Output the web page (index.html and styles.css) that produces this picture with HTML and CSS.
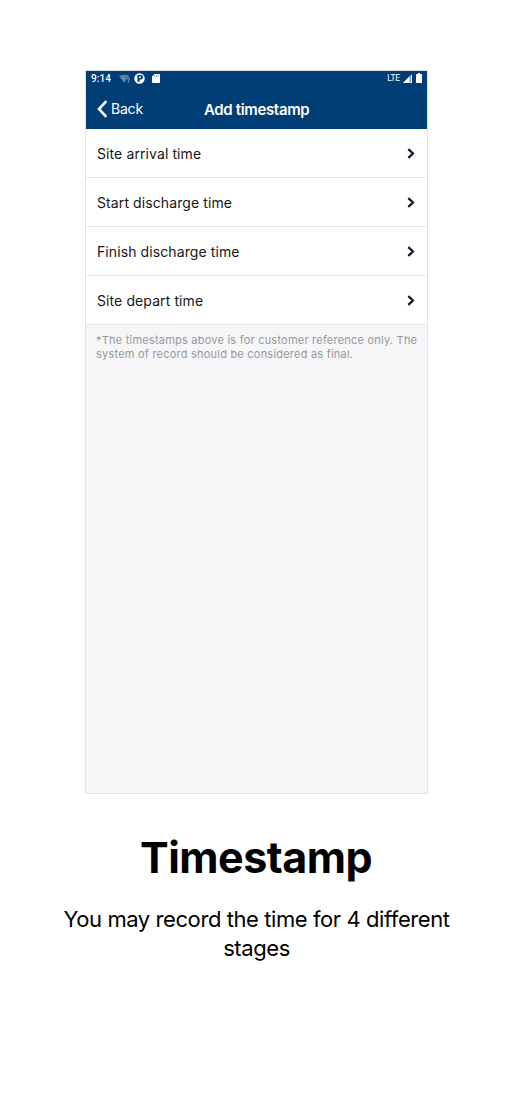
FILE: index.html
```html
<!DOCTYPE html>
<html lang="en">
<head>
<meta charset="utf-8">
<title>Timestamp</title>
<link rel="stylesheet" href="styles.css">
</head>
<body>
<main class="page">
  <section class="phone">
    <header class="top">
      <div class="status">
        <span class="clock">9:14</span>
        <svg class="wifi" width="12" height="10" viewBox="0 0 12 10"><path d="M0 2.3Q5 -.8 10.4 2.2L9.2 3.5H7.3V6L5.3 8.7Z" fill="#5e84a6"/><path d="M8 5.3c0-1.4 2.5-1.4 2.5 0 0 1-1.2 1-1.2 2M9.3 8v1" fill="none" stroke="#a8bdcf" stroke-width="1"/></svg>
        <svg class="app" width="11" height="11" viewBox="0 0 11 11"><circle cx="5.500" cy="5.500" r="5.200" fill="#fff"/><path d="M3.500 2h3.300a2.200 2.200 0 0 1 0 4.500H5.700v2.200H3.500Z" fill="#003e75"/><path d="M5 3.400h1.900v1.700H5z" fill="#fff"/></svg>
        <svg class="card" width="8" height="9" viewBox="0 0 8 9"><path d="M2.500 0H7a1 1 0 0 1 1 1v7a1 1 0 0 1-1 1H1a1 1 0 0 1-1-1V2.500Z" fill="#fff"/><path d="M2.600 1.300v1.500M4.300 1.300v1.500M6 1.300v1.500" stroke="#003e75" stroke-width=".6"/></svg>
        <span class="lte">LTE</span>
        <svg class="signal" width="9" height="9" viewBox="0 0 9 9"><path d="M9 0v9H0Z" fill="#8ba7bf"/><path d="M6.400 2.600V9H0ZM8.200 .8H9V9H7.200V8.200h1Z" fill="#fff"/></svg>
        <svg class="battery" width="6" height="10" viewBox="0 0 6 10"><path d="M2 0h2v1h1.400q.6 0 .6.600v7.800q0 .6-.6.600H.6Q0 10 0 9.400V1.600Q0 1 .6 1H2Z" fill="#fff"/></svg>
      </div>
      <nav class="nav">
        <div class="back"><svg width="11" height="18" viewBox="0 0 11 18"><path d="M9.300 1.200 2 9l7.300 7.800" fill="none" stroke="#fff" stroke-width="2.600"/></svg><span>Back</span></div>
        <h2 class="nav-title">Add timestamp</h2>
      </nav>
    </header>
    <ul class="list">
      <li class="row"><span>Site arrival time</span><svg class="chev" width="8" height="11" viewBox="0 0 8 11"><path d="M1.300 1.100 6 5.500 1.300 9.900"/></svg></li>
      <li class="row"><span>Start discharge time</span><svg class="chev" width="8" height="11" viewBox="0 0 8 11"><path d="M1.300 1.100 6 5.500 1.300 9.900"/></svg></li>
      <li class="row"><span>Finish discharge time</span><svg class="chev" width="8" height="11" viewBox="0 0 8 11"><path d="M1.300 1.100 6 5.500 1.300 9.900"/></svg></li>
      <li class="row"><span>Site depart time</span><svg class="chev" width="8" height="11" viewBox="0 0 8 11"><path d="M1.300 1.100 6 5.500 1.300 9.900"/></svg></li>
    </ul>
    <p class="note">*The timestamps above is for customer reference only. The<br>system of record should be considered as final.</p>
  </section>
  <h1 class="title">Timestamp</h1>
  <p class="desc">You may record the time for 4 different<br>stages</p>
</main>
</body>
</html>
```
FILE: styles.css
```css
* { box-sizing: border-box; }
body { margin: 0; background: #fff; color: #000; font-family: Inter, "Liberation Sans", sans-serif; }
svg { display: block; flex: none; }
.page { height: 1108px; padding-top: 70px; display: flex; flex-direction: column; align-items: center; }
.phone { width: 343px; height: 724px; margin-left: 1px; border: 1px solid #e2e2e9; background: #f6f6f9; flex: none; }
.top { height: 58px; background: #003e75; color: #fff; }
.status { height: 15px; padding: 0 5px 0 5px; display: flex; align-items: center; }
.clock { width: 28px; font: 500 10px/15px Roboto, sans-serif; letter-spacing: .1px; }
.app { margin-left: 3px; }
.card { margin-left: 7px; }
.lte { margin-left: auto; font: 400 8.500px/15px Roboto, sans-serif; letter-spacing: -.2px; }
.signal { margin-left: 3px; }
.battery { margin-left: 4px; margin-top: -1px; }
.nav { height: 43px; padding-left: 11px; display: grid; grid-template-columns: 107px 1fr; align-items: center; }
.back { display: flex; align-items: center; gap: 3px; margin-top: 2px; font-size: 14px; line-height: 18px; letter-spacing: -.2px; }
.nav-title { margin: 4px 0 0; font-size: 15px; line-height: 20px; font-weight: 600; letter-spacing: -.35px; }
.list { margin: 0; padding: 0; list-style: none; background: #fff; }
.row { height: 49px; padding: 0 12px 0 11px; display: flex; align-items: center; justify-content: space-between; border-bottom: 1px solid #e8e8ea; font-size: 14px; color: #161616; letter-spacing: .1px; }
.chev path { fill: none; stroke: #10162a; stroke-width: 2.2; }
.note { margin: 8px 0 0 10px; font-size: 11px; line-height: 14px; color: #98989b; letter-spacing: .22px; white-space: nowrap; }
.title { margin: 36px 0 0; font-size: 43px; line-height: 54px; font-weight: 700; letter-spacing: -.5px; }
.desc { margin: 21px 0 0 1px; font-size: 22px; line-height: 29px; letter-spacing: -.42px; text-align: center; white-space: nowrap; }
```
